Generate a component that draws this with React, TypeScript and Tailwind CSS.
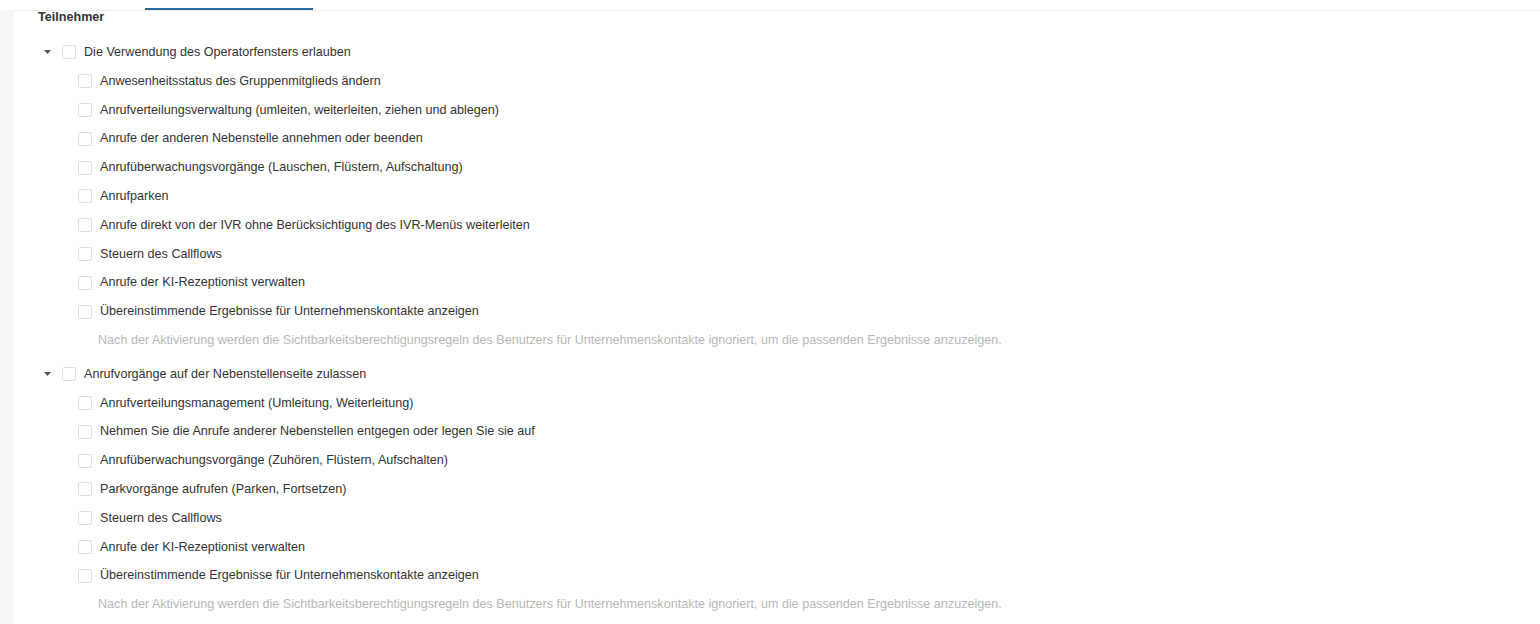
const groups = [
  {
    label: "Die Verwendung des Operatorfensters erlauben",
    items: [
      "Anwesenheitsstatus des Gruppenmitglieds ändern",
      "Anrufverteilungsverwaltung (umleiten, weiterleiten, ziehen und ablegen)",
      "Anrufe der anderen Nebenstelle annehmen oder beenden",
      "Anrufüberwachungsvorgänge (Lauschen, Flüstern, Aufschaltung)",
      "Anrufparken",
      "Anrufe direkt von der IVR ohne Berücksichtigung des IVR-Menüs weiterleiten",
      "Steuern des Callflows",
      "Anrufe der KI-Rezeptionist verwalten",
      "Übereinstimmende Ergebnisse für Unternehmenskontakte anzeigen",
    ],
  },
  {
    label: "Anrufvorgänge auf der Nebenstellenseite zulassen",
    items: [
      "Anrufverteilungsmanagement (Umleitung, Weiterleitung)",
      "Nehmen Sie die Anrufe anderer Nebenstellen entgegen oder legen Sie sie auf",
      "Anrufüberwachungsvorgänge (Zuhören, Flüstern, Aufschalten)",
      "Parkvorgänge aufrufen (Parken, Fortsetzen)",
      "Steuern des Callflows",
      "Anrufe der KI-Rezeptionist verwalten",
      "Übereinstimmende Ergebnisse für Unternehmenskontakte anzeigen",
    ],
  },
];

const hint =
  "Nach der Aktivierung werden die Sichtbarkeitsberechtigungsregeln des Benutzers für Unternehmenskontakte ignoriert, um die passenden Ergebnisse anzuzeigen.";

function Box({ className = "" }: { className?: string }) {
  return (
    <span
      className={
        "block w-[14px] h-[14px] shrink-0 rounded-[2px] border border-[#dcdfe6] bg-white " + className
      }
    />
  );
}

export default function App() {
  return (
    <div
      className="min-h-screen bg-white text-[12.6px] text-[#333]"
      style={{ fontFamily: '"Liberation Sans", Arial, sans-serif' }}
    >
      {/* tab underline */}
      <div className="h-[10px] flex items-end">
        <div className="ml-[145px] w-[168px] h-[2px] bg-[#2e6a99]" />
      </div>
      <div className="flex">
        <div className="w-[14px] shrink-0 bg-[#f7f7f7]" />
        <div className="flex-1 border-t border-[#ededed] bg-white pb-4">
          <div className="pl-[24px] font-bold leading-[12px]">Teilnehmer</div>
          <div className="mt-[15px]">
            {groups.map((g, gi) => (
              <div key={gi} className={gi > 0 ? "mt-[5px]" : ""}>
                <div className="h-[28.8px] flex items-center pl-[27px]">
                  <span className="w-[13px] flex justify-center">
                    <svg width="7" height="4" viewBox="0 0 7 4">
                      <path d="M0 0h7L3.5 4z" fill="#555" />
                    </svg>
                  </span>
                  <Box className="ml-[8px]" />
                  <span className="ml-[8px] whitespace-nowrap">{g.label}</span>
                </div>
                {g.items.map((it, i) => (
                  <div key={i} className="h-[28.8px] flex items-center pl-[64px]">
                    <Box />
                    <span className="ml-[8px] whitespace-nowrap">{it}</span>
                  </div>
                ))}
                <div className="h-[28.8px] flex items-center pl-[84px] text-[#b8b8b8] whitespace-nowrap">
                  {hint}
                </div>
              </div>
            ))}
          </div>
        </div>
      </div>
    </div>
  );
}
